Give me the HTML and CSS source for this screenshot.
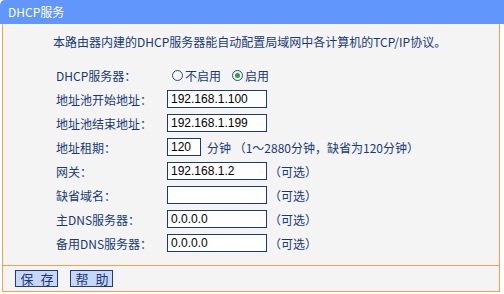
FILE: index.html
```html
<!DOCTYPE html>
<html lang="zh-CN">
<head>
  <meta charset="UTF-8">
  <title>DHCP服务</title>
  <link rel="stylesheet" href="styles.css">
</head>
<body>
  <div class="title-bar">DHCP服务</div>
  <div class="panel">
    <div class="panel-body">
      <p class="intro">本路由器内建的DHCP服务器能自动配置局域网中各计算机的TCP/IP协议。</p>
      <div class="form">
        <label class="form-label">DHCP服务器：</label>
        <div class="form-field">
          <label class="radio"><input type="radio" name="dhcp">不启用</label>
          <label class="radio"><input type="radio" name="dhcp" checked>启用</label>
        </div>

        <label class="form-label">地址池开始地址：</label>
        <div class="form-field"><input class="text-input" type="text" value="192.168.1.100"></div>

        <label class="form-label">地址池结束地址：</label>
        <div class="form-field"><input class="text-input" type="text" value="192.168.1.199"></div>

        <label class="form-label">地址租期：</label>
        <div class="form-field">
          <input class="text-input short" type="text" value="120">
          <span class="unit">分钟 （1～2880分钟，缺省为120分钟）</span>
        </div>

        <label class="form-label">网关：</label>
        <div class="form-field"><input class="text-input" type="text" value="192.168.1.2"><span class="hint">（可选）</span></div>

        <label class="form-label">缺省域名：</label>
        <div class="form-field"><input class="text-input" type="text" value=""><span class="hint">（可选）</span></div>

        <label class="form-label">主DNS服务器：</label>
        <div class="form-field"><input class="text-input" type="text" value="0.0.0.0"><span class="hint">（可选）</span></div>

        <label class="form-label">备用DNS服务器：</label>
        <div class="form-field"><input class="text-input" type="text" value="0.0.0.0"><span class="hint">（可选）</span></div>
      </div>
    </div>
    <div class="actions">
      <button class="btn" type="button">保 存</button>
      <button class="btn" type="button">帮 助</button>
    </div>
  </div>
</body>
</html>
```

FILE: styles.css
```css
* {
  margin: 0;
  padding: 0;
  box-sizing: border-box;
}

body {
  background: #fff;
  font-family: "Noto Sans CJK SC", "Liberation Sans", sans-serif;
  font-size: 12px;
  color: #18397a;
}

.title-bar {
  height: 24px;
  line-height: 24px;
  padding-left: 8px;
  background: #6197fd;
  color: #fff;
  border-top-left-radius: 5px;
}

.panel {
  width: 498px;
  margin-left: 2px;
  border: 1px solid #f0a24e;
  border-top: none;
  background: #f4f4f4;
}

.panel-body {
  padding: 8px 0 10px 50px;
  border-bottom: 1px solid #f0a24e;
}

.intro {
  height: 20px;
  line-height: 20px;
  margin-bottom: 11px;
}

.form {
  display: grid;
  grid-template-columns: 111px auto;
  grid-auto-rows: 24px;
  padding-left: 3px;
}

.form-label,
.form-field {
  display: flex;
  align-items: center;
}

.radio {
  display: flex;
  align-items: center;
  margin-right: 6px;
}

.radio input {
  appearance: none;
  width: 11px;
  height: 11px;
  margin: 0 2px 0 5px;
  border: 1px solid #1d5287;
  border-radius: 50%;
  background: #f7f7f7;
  position: relative;
}

.radio input:checked::after {
  content: "";
  position: absolute;
  left: 2px;
  top: 2px;
  width: 5px;
  height: 5px;
  border-radius: 50%;
  background: #2ea334;
}

.text-input {
  width: 100px;
  height: 18px;
  padding: 0 3px;
  border: 1px solid #1c3a7a;
  background: #fff;
  font-family: "Liberation Sans", sans-serif;
  font-size: 12px;
  color: #000;
  outline: none;
}

.text-input.short {
  width: 34px;
}

.unit {
  margin-left: 6px;
  white-space: nowrap;
}

.hint {
  margin-left: 2px;
  white-space: nowrap;
}

.actions {
  height: 25px;
  display: flex;
  align-items: center;
  gap: 12px;
  padding-left: 12px;
}

.btn {
  width: 43px;
  height: 17px;
  padding-left: 3px;
  border: 1px solid #1f3d7c;
  background: #c9d7f6;
  font-family: "Noto Sans CJK SC", sans-serif;
  font-size: 13px;
  line-height: 15px;
  color: #18397a;
  letter-spacing: 2px;
}
```
